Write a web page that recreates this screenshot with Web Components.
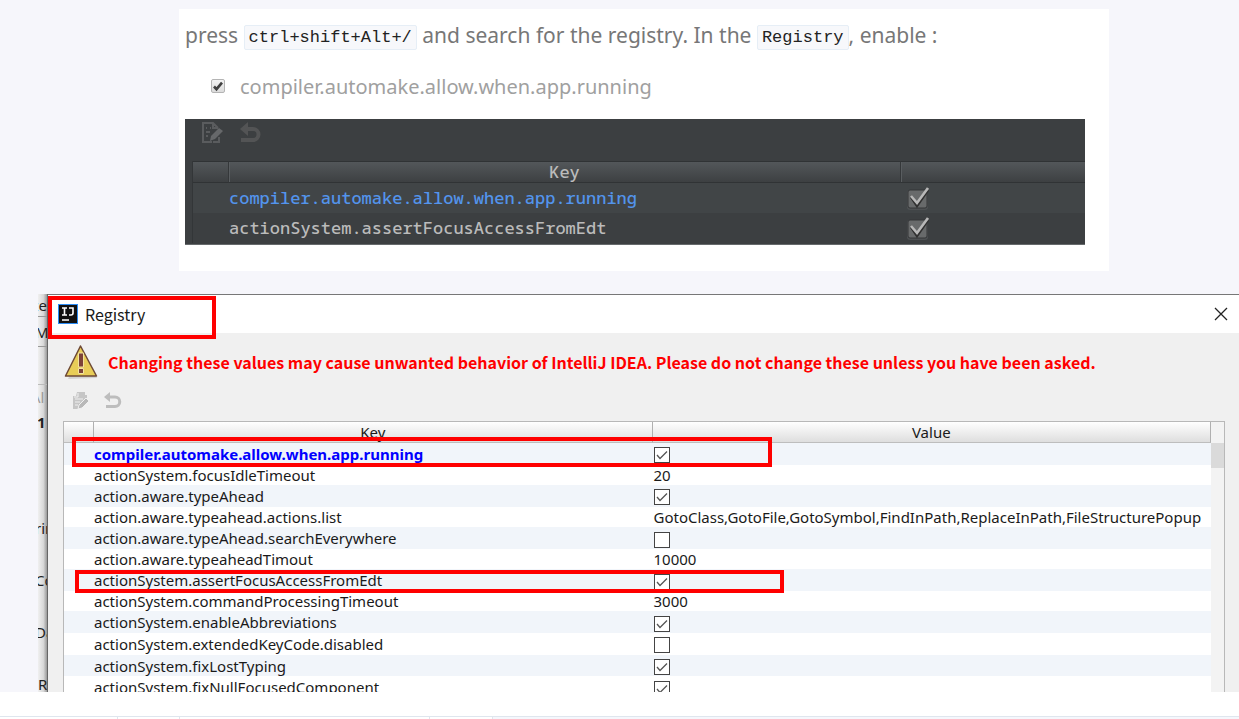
<!DOCTYPE html>
<html lang="en">
<head>
<meta charset="utf-8">
<title>Registry settings</title>
<style>
  body {
    margin: 0;
    background: #f6f6fb;
    font-family: "Noto Sans", "Open Sans", sans-serif;
  }
</style>
</head>
<body>
<registry-article></registry-article>

<template id="article-tpl">
  <style>
    :host { display: block; height: 100vh; overflow: hidden; }
    instruction-card { margin: 9px 130px 23px 179px; }
    registry-shot { margin-left: 38px; }
    .after { background: #fff; padding-top: 24px; }
  </style>
  <instruction-card></instruction-card>
  <registry-shot></registry-shot>
  <div class="after"><cell-strip></cell-strip></div>
</template>

<template id="strip-tpl">
  <style>
    :host { display: flex; height: 24px; border-top: 1px solid #dfe6ee; background: #f5f7fc; }
    span { background: #fff; border-right: 1px solid #dfe6ee; box-sizing: border-box; }
    .a { width: 118px; } .b { width: 62px; } .c { width: 250px; } .d { width: 63px; }
  </style>
  <span class="a"></span><span class="b"></span><span class="c"></span><span class="d"></span>
</template>

<template id="card-tpl">
  <style>
    :host { display: block; background: #fff; padding: 0 24px 26px 6px; color: #777; }
    p { margin: 0; height: 52px; font-size: 21px; line-height: 52px; white-space: nowrap; }
    code {
      font: 17px/23px "Liberation Mono", monospace; color: #222;
      display: inline-block; vertical-align: middle; padding: 0 4px;
      background: #f7f8fb; border: 1px solid #e6eef6; border-radius: 2px;
    }
    .task {
      display: flex; align-items: center; height: 50px; margin-bottom: 8px;
      padding-left: 26px; gap: 15px; font-size: 20px; color: #a0a0a0;
    }
    .task input {
      appearance: none; margin: 0; width: 14px; height: 14px; border: 1px solid #b4b4b4; border-radius: 2px;
      background: url("data:image/svg+xml,%3Csvg xmlns='http://www.w3.org/2000/svg' viewBox='0 0 12 12'%3E%3Cpath d='M2 6.5l2.5 2.7L10 2.6' fill='none' stroke='%23404040' stroke-width='2.6'/%3E%3C/svg%3E"), linear-gradient(#f2f2f2, #dcdcdc);
    }
  </style>
  <p>press <code>ctrl+shift+Alt+/</code> and search for the registry. In the <code>Registry</code>, enable :</p>
  <label class="task"><input type="checkbox" checked><span>compiler.automake.allow.when.app.running</span></label>
  <dark-registry></dark-registry>
</template>

<template id="dark-tpl">
  <style>
    :host {
      display: block; box-sizing: border-box; height: 126px; overflow: hidden;
      padding-left: 7px; background: #3c3f41; border-bottom: 1px solid #666a6c;
    }
    .tools { display: flex; gap: 16px; height: 39px; padding: 2px 0 0 10px; box-sizing: border-box; }
    button { all: unset; width: 22px; height: 24px; }
    svg { display: block; }
    table {
      width: 100%; table-layout: fixed; border-collapse: separate; border-spacing: 0;
      border-left: 1px solid #333638; margin-top: 3px;
      font: 500 17px/20px "Noto Sans Mono", "DejaVu Sans Mono", monospace; color: #bbb;
    }
    th {
      height: 20px; padding: 0; font-weight: 500; line-height: 20px; box-sizing: border-box;
      border-top: 1px solid #303335; border-bottom: 1px solid #303335;
      background: linear-gradient(#53575a, #3d4042);
    }
    th + th { border-left: 1px solid #35383a; box-shadow: inset 1px 0 #595d60; }
    td { height: 30px; padding: 0; }
    tbody tr:first-child { background: #414547; }
    .changed { color: #5394ec; }
    td:nth-child(2) { padding-left: 1px; }
    td:last-child { padding-left: 6px; }
    input {
      appearance: none; display: block; margin: 0; width: 24px; height: 26px;
      background: url("data:image/svg+xml,%3Csvg xmlns='http://www.w3.org/2000/svg' viewBox='0 0 24 26'%3E%3Crect x='1' y='5' width='21' height='20' rx='3' fill='%234e5153'/%3E%3Crect x='2' y='5' width='19' height='18' rx='2' fill='%23686a6b' stroke='%23343638'/%3E%3Cpath d='M5 12l6 9L22 5' fill='none' stroke='%23303030' stroke-width='2.5'/%3E%3Cpath d='M5 11l6 7L22 3' fill='none' stroke='%23b8b8b8' stroke-width='2.6'/%3E%3C/svg%3E");
    }
  </style>
  <div class="tools">
    <button aria-label="Edit">
      <svg width="22" height="24" viewBox="0 0 22 24" fill="none" stroke="#5a5c5e" stroke-width="2">
        <path d="M10 21H1V2h10l5 5M11 2v5h5M4 7h1M8 7h1M4 11h4M4 15h2"/>
        <path d="M8 20l1-5 8-8 4 3-8 8z" fill="#66686a" stroke="none"/><path d="M11 21h6v-5" stroke-width="2"/>
      </svg>
    </button>
    <button aria-label="Revert">
      <svg width="22" height="24" viewBox="0 0 22 24" fill="none">
        <path d="M5 8h8a5 5 0 0 1 0 11H1" stroke="#535455" stroke-width="4"/><path d="M0 8l8-7v14z" fill="#535455"/>
      </svg>
    </button>
  </div>
  <table>
    <colgroup><col style="width:35px"><col><col style="width:185px"></colgroup>
    <thead><tr><th></th><th>Key</th><th></th></tr></thead>
    <tbody>
      <tr class="changed"><td></td><td>compiler.automake.allow.when.app.running</td><td><input type="checkbox" checked aria-label="compiler.automake.allow.when.app.running"></td></tr>
      <tr><td></td><td>actionSystem.assertFocusAccessFromEdt</td><td><input type="checkbox" checked aria-label="actionSystem.assertFocusAccessFromEdt"></td></tr>
    </tbody>
  </table>
</template>

<template id="shot-tpl">
  <style>
    :host { display: flex; height: 398px; overflow: hidden; }
    registry-dialog { flex: 1; min-width: 0; }
  </style>
  <window-sliver></window-sliver>
  <registry-dialog></registry-dialog>
</template>

<template id="sliver-tpl">
  <style>
    :host {
      display: block; width: 9px; overflow: hidden; font-size: 15px; color: #222;
      background: linear-gradient(90deg, #f0f0f0, #d8d8d8 60%, #999);
      border-right: 1px solid #666;
    }
    div { display: flex; align-items: center; height: 52px; white-space: nowrap; box-sizing: border-box; text-indent: -3px; }
    .menu { height: 22px; justify-content: flex-end; text-indent: 0; }
    .box { height: 31px; border-top: 1px solid #999; border-bottom: 1px solid #999; }
    .blank { height: 38px; border-bottom: 1px solid #bbb; }
    .path { height: 24px; color: #999; }
    .num { height: 26px; font-weight: 700; text-indent: -1px; }
    .gap { height: 67px; }
    .last { text-indent: 0; }
  </style>
  <div class="menu">ze</div><div class="box">M</div><div class="blank"></div><div class="path">\l</div>
  <div class="num">1</div><div class="gap"></div><div>rin</div><div>Co</div><div>Da</div><div class="last">R</div>
</template>

<template id="dialog-tpl">
  <style>
    :host { display: block; position: relative; background: #f0f0f0; border-top: 1px solid #777; color: #1a1a1a; }
    header {
      display: flex; align-items: center; gap: 7px; height: 38px; padding: 0 10px; box-sizing: border-box;
      background: #fff; font: 16px/20px "Noto Sans CJK SC", "Noto Sans", sans-serif;
    }
    header button { all: unset; margin-left: auto; width: 16px; height: 16px; }
    svg { display: block; }
    .warn { display: flex; align-items: center; gap: 10px; height: 58px; padding-left: 16px; }
    .warn strong { font: 700 16px/22px "Noto Sans CJK SC", "Noto Sans", sans-serif; color: #f00; white-space: nowrap; }
    .tools { display: flex; gap: 14px; height: 30px; padding: 0 0 0 24px; }
    .tools button { all: unset; width: 18px; height: 18px; }
    registry-table { margin: 0 14px 0 15px; }
    .mark { position: absolute; box-sizing: border-box; border: 4px solid #f00; left: 0; top: 1px; width: 168px; height: 43px; pointer-events: none; }
  </style>
  <header>
    <svg width="20" height="20" viewBox="0 0 20 20">
      <rect width="20" height="20" fill="#2b8cf5"/><rect x="1" y="1" width="18" height="18" fill="#111"/>
      <path d="M4 4h5M6.500 4v7M4 11h5M11 4h4v5q0 2-2 2h-2M4 16h7" fill="none" stroke="#fff" stroke-width="1.600"/>
    </svg>
    <span>Registry</span>
    <button aria-label="Close"><svg width="16" height="16" viewBox="0 0 16 16"><path d="M2 2l12 12M14 2L2 14" stroke="#222" stroke-width="1.300"/></svg></button>
  </header>
  <div class="warn">
    <svg width="34" height="38" viewBox="0 0 34 38">
      <path d="M4 36L18 6l15 29z" fill="#000" opacity=".12"/>
      <path d="M16.500 3L1.500 33h31z" fill="#e8cd57" stroke="#6e4a36" stroke-width="1.500" stroke-linejoin="round"/>
      <path d="M14.500 10h5v14h-5zM14.500 25.500h5v5h-5z" fill="#7c4238" stroke="#f2e3a0"/>
    </svg>
    <strong>Changing these values may cause unwanted behavior of IntelliJ IDEA. Please do not change these unless you have been asked.</strong>
  </div>
  <div class="tools">
    <button aria-label="Edit">
      <svg width="18" height="18" viewBox="0 0 18 18"><path d="M5 1h8v3h2v3l-8 8v3H1V5h3z" fill="#c6c6c6"/><path d="M3 8h8M3 11h5M3 14h3M6 2v4H2" stroke="#f0f0f0" fill="none"/><path d="M6 18l1-4 7-7 3 3-7 7z" fill="#b8b8b8" stroke="#f0f0f0"/></svg>
    </button>
    <button aria-label="Revert">
      <svg width="18" height="18" viewBox="0 0 18 18"><path d="M5 6h6a4.500 4.500 0 0 1 0 9.500H2" fill="none" stroke="#bdbdbd" stroke-width="3"/><path d="M0 6l6-5v10z" fill="#bdbdbd"/></svg>
    </button>
  </div>
  <registry-table></registry-table>
  <div class="mark"></div>
</template>

<template id="table-tpl">
  <style>
    :host { display: flex; position: relative; border: 1px solid #b8b8b8; }
    table {
      flex: 1; width: 100%; min-width: 0; height: 276px; table-layout: fixed; border-collapse: separate; border-spacing: 0;
      background: #fff; font-size: 15px; line-height: 18px; white-space: nowrap;
    }
    th {
      height: 21px; padding: 0; box-sizing: border-box; font-weight: 400;
      background: linear-gradient(#fff, #dedede); border-bottom: 1px solid #bdbdbd; border-right: 1px solid #b0b0b0;
    }
    td { padding: 0; }
    td:nth-child(3) { padding-left: 1px; }
    tbody tr:nth-child(odd) { background: #f1f5fa; }
    tbody tr:first-child td { font-weight: 700; color: #00f; }
    input {
      appearance: none; display: block; margin: 3px 0 0; width: 16px; height: 16px;
      background: #fff; border: 1px solid #444; box-sizing: border-box;
    }
    input:checked {
      background: #fff url("data:image/svg+xml,%3Csvg xmlns='http://www.w3.org/2000/svg' viewBox='0 0 14 14'%3E%3Cpath d='M2 7l3 3.500L12 3.500' fill='none' stroke='%23555' stroke-width='1.300'/%3E%3C/svg%3E");
    }
    .scroll { flex: none; width: 13px; background: #f3f3f3; padding-top: 21px; box-sizing: border-box; }
    .thumb { height: 25px; background: #dadada; }
    .mark { position: absolute; box-sizing: border-box; border: 4px solid #f00; pointer-events: none; }
    .first { left: 8px; top: 15px; width: 700px; height: 30px; }
    .second { left: 11px; top: 148px; width: 709px; height: 23px; }
  </style>
  <table>
    <colgroup><col style="width:30px"><col><col></colgroup>
    <thead><tr><th></th><th>Key</th><th>Value</th></tr></thead>
    <tbody></tbody>
  </table>
  <div class="scroll"><div class="thumb"></div></div>
  <div class="mark first"></div>
  <div class="mark second"></div>
</template>

<script>
  const define = (name, tpl, setup) => customElements.define(name, class extends HTMLElement {
    constructor() {
      super();
      const root = this.attachShadow({ mode: 'open' });
      root.append(document.getElementById(tpl).content.cloneNode(true));
      if (setup) setup(root);
    }
  });

  const entries = [
    ['compiler.automake.allow.when.app.running', true],
    ['actionSystem.focusIdleTimeout', '20'],
    ['action.aware.typeAhead', true],
    ['action.aware.typeahead.actions.list', 'GotoClass,GotoFile,GotoSymbol,FindInPath,ReplaceInPath,FileStructurePopup'],
    ['action.aware.typeAhead.searchEverywhere', false],
    ['action.aware.typeaheadTimout', '10000'],
    ['actionSystem.assertFocusAccessFromEdt', true],
    ['actionSystem.commandProcessingTimeout', '3000'],
    ['actionSystem.enableAbbreviations', true],
    ['actionSystem.extendedKeyCode.disabled', false],
    ['actionSystem.fixLostTyping', true],
    ['actionSystem.fixNullFocusedComponent', true],
  ];

  define('registry-table', 'table-tpl', root => {
    const body = root.querySelector('tbody');
    for (const [key, value] of entries) {
      const row = body.insertRow();
      row.insertCell();
      row.insertCell().textContent = key;
      const cell = row.insertCell();
      if (typeof value === 'boolean') {
        const box = document.createElement('input');
        box.type = 'checkbox';
        box.checked = value;
        box.setAttribute('aria-label', key);
        cell.append(box);
      } else {
        cell.textContent = value;
      }
    }
  });
  define('registry-dialog', 'dialog-tpl');
  define('window-sliver', 'sliver-tpl');
  define('registry-shot', 'shot-tpl');
  define('dark-registry', 'dark-tpl');
  define('instruction-card', 'card-tpl');
  define('cell-strip', 'strip-tpl');
  define('registry-article', 'article-tpl');
</script>
</body>
</html>
